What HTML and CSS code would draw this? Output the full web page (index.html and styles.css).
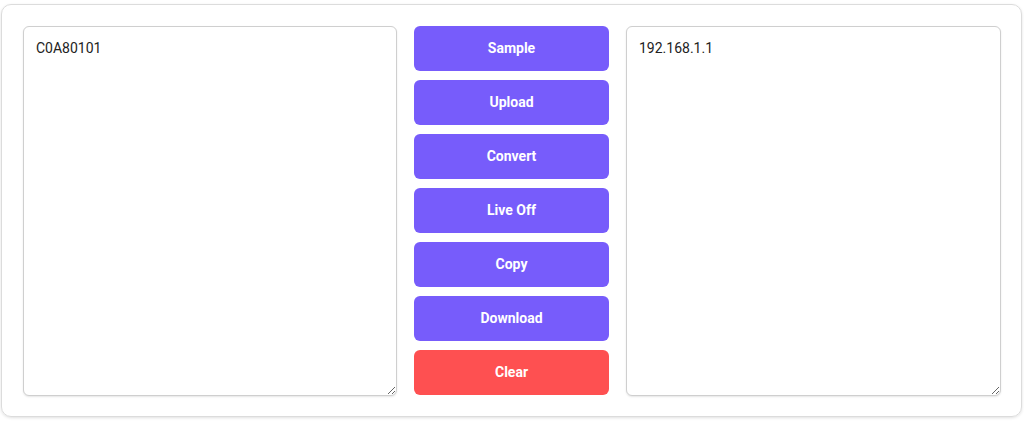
FILE: index.html
```html
<!DOCTYPE html>
<html>
<head>
<meta charset="utf-8">
<link rel="stylesheet" href="styles.css">
</head>
<body>
<div class="card">
  <textarea class="box">C0A80101</textarea>
  <div class="actions">
    <button class="btn">Sample</button>
    <button class="btn">Upload</button>
    <button class="btn">Convert</button>
    <button class="btn">Live Off</button>
    <button class="btn">Copy</button>
    <button class="btn">Download</button>
    <button class="btn btn-clear">Clear</button>
  </div>
  <textarea class="box">192.168.1.1</textarea>
</div>
</body>
</html>
```
FILE: styles.css
```css
html, body {
  margin: 0;
  padding: 0;
  background: #fff;
}
body {
  padding: 4px 2px 4px 1px;
  font-family: Roboto, "Liberation Sans", sans-serif;
}
.card {
  box-sizing: border-box;
  height: 413px;
  border: 1px solid #dcdcdc;
  border-radius: 10px;
  box-shadow: 0 1px 3px rgba(0,0,0,0.12);
  padding: 21px 20px 21px 21px;
  display: grid;
  grid-template-columns: 374px 195px 375px;
  column-gap: 17px;
  align-items: stretch;
}
.box {
  box-sizing: border-box;
  height: 370px;
  width: 100%;
  margin: 0;
  border: 1px solid #cfcfcf;
  border-radius: 6px;
  box-shadow: 0 1px 2px rgba(0,0,0,0.10);
  padding: 11px 12px;
  font-family: Roboto, "Liberation Sans", sans-serif;
  font-size: 14px;
  line-height: 20px;
  color: #222;
  resize: both;
  outline: none;
}
.actions {
  display: flex;
  flex-direction: column;
  gap: 9px;
}
.btn {
  height: 45px;
  border: 0;
  border-radius: 6px;
  background: #775cfb;
  color: #fff;
  font-family: Roboto, "Liberation Sans", sans-serif;
  font-weight: 700;
  font-size: 14px;
  line-height: 18px;
  margin: 0;
  padding: 0 0 2px 0;
}
.btn-clear {
  background: #fe5051;
}
```
